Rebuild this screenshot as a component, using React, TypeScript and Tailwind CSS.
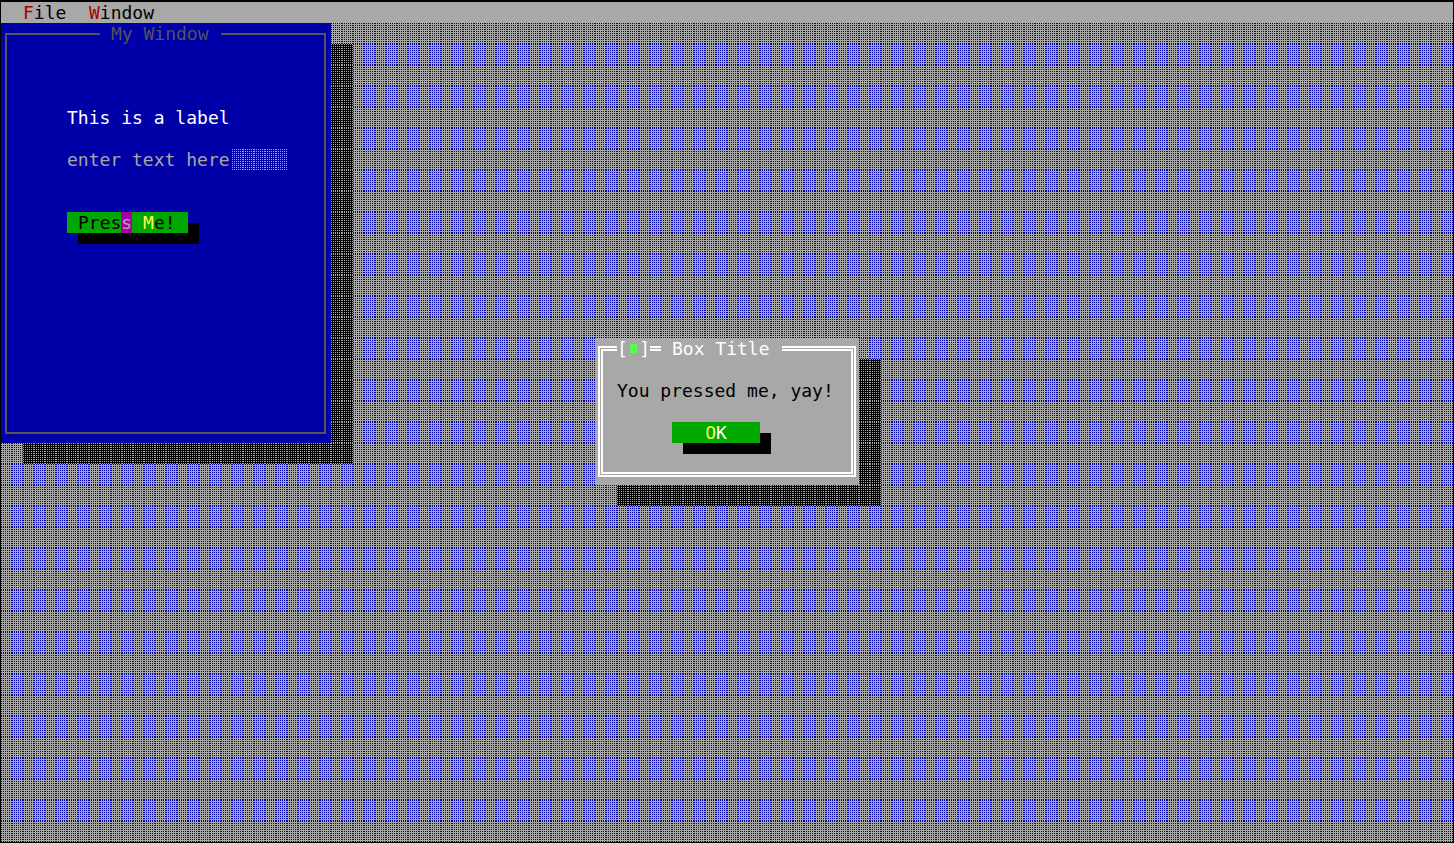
import type { ReactNode } from "react";

const CELL_W = 11;
const CELL_H = 21;

/** Medium-shade fill: one dot on every other pixel, restarted in each character cell. */
function hatch(dot: string, ground: string) {
  let dots = "";
  for (let y = 0; y < CELL_H; y += 2) {
    for (let x = 0; x < CELL_W; x += 2) {
      dots += `M${x} ${y}h1v1h-1z`;
    }
  }
  const svg =
    `<svg xmlns="http://www.w3.org/2000/svg" width="${CELL_W}" height="${CELL_H}" shape-rendering="crispEdges">` +
    `<path d="${dots}" fill="${dot}"/></svg>`;
  return {
    backgroundColor: ground,
    backgroundImage: `url("data:image/svg+xml,${encodeURIComponent(svg)}")`,
    backgroundSize: `${CELL_W}px ${CELL_H}px`,
  };
}

function MenuItem({ hotkey, rest }: { hotkey: string; rest: string }) {
  return (
    <button type="button" className="min-w-[66px] px-[11px] text-left text-black">
      <span className="text-[#a80000]">{hotkey}</span>
      {rest}
    </button>
  );
}

function Floating({ place, children }: { place: string; children: ReactNode }) {
  return (
    <div className={`absolute ${place}`}>
      <div
        className="absolute top-[21px] left-[22px] h-full w-full"
        style={hatch("#a8a8a8", "#000000")}
      />
      <div className="relative h-full w-full">{children}</div>
    </div>
  );
}

function MyWindow() {
  return (
    <section
      aria-labelledby="window-title"
      className="h-full w-full bg-[#0000a8] px-[66px] pt-[84px]"
    >
      <div className="absolute top-[10px] right-[5px] bottom-[9px] left-[4px] border-2 border-[#545454]" />
      <h1
        id="window-title"
        className="absolute top-0 left-[99px] w-[121px] bg-[#0000a8] px-[11px] whitespace-nowrap text-[#545454]"
      >
        My Window
      </h1>
      <label htmlFor="entry" className="block whitespace-nowrap text-white">
        This is a label
      </label>
      <div className="mt-[21px] flex w-[220px]">
        <input
          id="entry"
          type="text"
          defaultValue="enter text here"
          className="h-[21px] w-[165px] bg-[#0000a8] text-[#a8a8a8] outline-none"
        />
        <span className="h-[21px] flex-1" style={hatch("#a8a8a8", "#0000a8")} />
      </div>
      <button
        type="button"
        className="mt-[42px] block w-[121px] bg-[#00a800] px-[11px] text-left whitespace-nowrap text-black shadow-[11px_11px_0_#000]"
      >
        Pres<span className="bg-[#a800a8] text-[#a8a8a8]">s</span>{" "}
        <span className="text-[#fcfc54]">M</span>e!
      </button>
    </section>
  );
}

function MessageBox() {
  return (
    <section
      role="dialog"
      aria-labelledby="box-title"
      className="h-full w-full bg-[#a8a8a8] px-[22px] pt-[42px]"
    >
      <div className="absolute inset-x-[3px] inset-y-[8px] border-[5px] border-double border-white" />
      <div className="absolute top-0 left-[22px] flex gap-[11px] text-white">
        <button
          type="button"
          aria-label="Close"
          className="flex w-[33px] items-center justify-between bg-[#a8a8a8]"
        >
          <span>[</span>
          <span className="h-[9px] w-[7px] bg-[#54fc54]" />
          <span>]</span>
        </button>
        <h2 id="box-title" className="w-[121px] bg-[#a8a8a8] px-[11px] whitespace-nowrap">
          Box Title
        </h2>
      </div>
      <p className="whitespace-nowrap text-black">You pressed me, yay!</p>
      <button
        type="button"
        className="mt-[21px] ml-[55px] block w-[88px] bg-[#00a800] text-center text-white shadow-[11px_11px_0_#000]"
      >
        <span className="text-[#fcfc54]">O</span>K
      </button>
    </section>
  );
}

export default function App() {
  return (
    <div className="flex min-h-screen flex-col bg-black px-px pt-[2px] pb-px font-['DejaVu_Sans_Mono','Liberation_Mono',monospace] text-[18px] leading-[21px]">
      <nav className="flex bg-[#a8a8a8] px-[11px]">
        <MenuItem hotkey="F" rest="ile" />
        <MenuItem hotkey="W" rest="indow" />
      </nav>
      <main
        className="relative flex-1 overflow-hidden"
        style={hatch("#0000a8", "#a8a8a8")}
      >
        <Floating place="top-0 left-0 h-[420px] w-[330px]">
          <MyWindow />
        </Floating>
        <Floating place="top-[315px] left-[calc(50%-132px)] h-[147px] w-[264px]">
          <MessageBox />
        </Floating>
      </main>
    </div>
  );
}
